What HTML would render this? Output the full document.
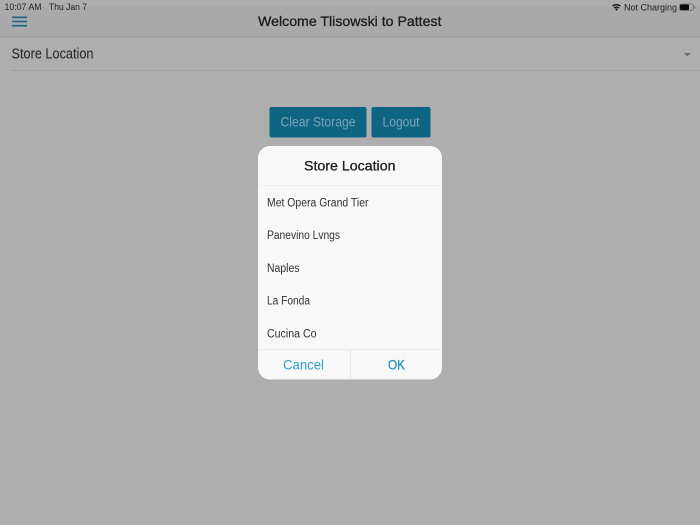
<!DOCTYPE html>
<html><head><meta charset="utf-8"><style>
html,body{margin:0;padding:0;background:#aeaeae;width:700px;height:525px;overflow:hidden}
svg{display:block;position:absolute;left:0;top:0}
text{font-family:"Liberation Sans",sans-serif}
</style></head><body>
<svg width="700" height="525" viewBox="0 0 700 525" xmlns="http://www.w3.org/2000/svg">
<rect width="700" height="525" fill="#aeaeae"/>
<rect y="7" width="700" height="29" fill="#a9a9a9"/>
<rect y="36" width="700" height="1.600" fill="#a0a0a0"/>
<text x="4.500" y="10" font-size="9.500" fill="#1e1e1e" textLength="37" lengthAdjust="spacingAndGlyphs">10:07 AM</text>
<text x="49" y="10" font-size="9.500" fill="#1e1e1e" textLength="38" lengthAdjust="spacingAndGlyphs">Thu Jan 7</text>
<text x="624" y="10.500" font-size="9.500" fill="#1e1e1e" textLength="53" lengthAdjust="spacingAndGlyphs">Not Charging</text>
<path d="M612.500 6.200a6 6 0 0 1 8 0M614 8a3.800 3.800 0 0 1 5 0" fill="none" stroke="#1a1a1a" stroke-width="1.300"/>
<path d="M615 9.200a2.200 2.200 0 0 1 3 0L616.500 10.800z" fill="#1a1a1a"/>
<rect x="679.500" y="4" width="14" height="6.500" rx="2" fill="none" stroke="#777" stroke-width="1"/>
<rect x="680" y="4.500" width="9" height="5.500" rx="1" fill="#0a0a0a"/>
<rect x="694.300" y="6" width="1" height="2.500" fill="#777"/>
<rect x="12" y="16.500" width="15" height="1.600" fill="#1a6583"/>
<rect x="12" y="20.700" width="15" height="1.600" fill="#1a6583"/>
<rect x="12" y="24.900" width="15" height="1.600" fill="#1a6583"/>
<text x="258" y="26" font-size="14" fill="#1c1c1c" stroke="#1c1c1c" stroke-width=".3" textLength="183.500" lengthAdjust="spacingAndGlyphs">Welcome Tlisowski to Pattest</text>
<text x="11.500" y="58.500" font-size="14.500" fill="#232323" textLength="82" lengthAdjust="spacingAndGlyphs">Store Location</text>
<rect x="11" y="70" width="689" height="1" fill="#a1a1a1"/>
<path d="M684 53h7l-3.500 3.500z" fill="#6e6e6e"/>
<rect x="269.500" y="107" width="97" height="30.500" rx="2" fill="#0e6583"/>
<rect x="371.500" y="107" width="59" height="30.500" rx="2" fill="#0e6583"/>
<text x="280.500" y="126.500" font-size="14" fill="#7ba3b4" textLength="75" lengthAdjust="spacingAndGlyphs">Clear Storage</text>
<text x="382.500" y="126.500" font-size="14" fill="#7ba3b4" textLength="37" lengthAdjust="spacingAndGlyphs">Logout</text>
<rect x="258" y="146" width="184" height="233.500" rx="12" fill="#f8f8f8"/>
<rect x="258" y="185" width="184" height="1" fill="#eeeeee"/>
<text x="304" y="170.500" font-size="14" fill="#1a1a1a" stroke="#1a1a1a" stroke-width=".3" textLength="91.500" lengthAdjust="spacingAndGlyphs">Store Location</text>
<text x="267" y="206.500" font-size="11.500" fill="#333" textLength="101.500" lengthAdjust="spacingAndGlyphs">Met Opera Grand Tier</text>
<text x="267" y="239" font-size="11.500" fill="#333" textLength="73" lengthAdjust="spacingAndGlyphs">Panevino Lvngs</text>
<text x="267" y="272" font-size="11.500" fill="#333" textLength="32.500" lengthAdjust="spacingAndGlyphs">Naples</text>
<text x="267" y="304.500" font-size="11.500" fill="#333" textLength="43" lengthAdjust="spacingAndGlyphs">La Fonda</text>
<text x="267" y="337.500" font-size="11.500" fill="#333" textLength="49.500" lengthAdjust="spacingAndGlyphs">Cucina Co</text>
<rect x="258" y="349" width="184" height="1" fill="#e9e9e9"/>
<rect x="350" y="350" width="1" height="29.500" fill="#e9e9e9"/>
<text x="283" y="369.500" font-size="14" fill="#2f9fcf" textLength="41" lengthAdjust="spacingAndGlyphs">Cancel</text>
<text x="388" y="369.500" font-size="14" fill="#1f8cbc" stroke="#1f8cbc" stroke-width=".2" textLength="17" lengthAdjust="spacingAndGlyphs">OK</text>
</svg>
</body></html>
